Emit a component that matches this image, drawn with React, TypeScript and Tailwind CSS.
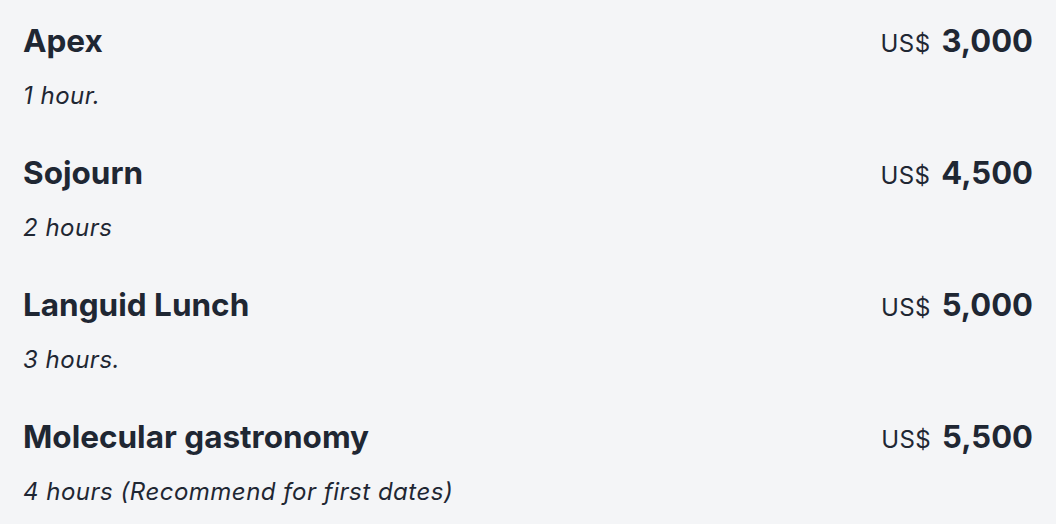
const items = [
  { name: 'Apex', note: '1 hour.', price: '3,000' },
  { name: 'Sojourn', note: '2 hours', price: '4,500' },
  { name: 'Languid Lunch', note: '3 hours.', price: '5,000' },
  { name: 'Molecular gastronomy', note: '4 hours (Recommend for first dates)', price: '5,500' },
];

export default function App() {
  return (
    <div
      className="min-h-screen bg-[#f4f5f7] text-[#1f2733] px-[23px]"
      style={{ fontFamily: 'Inter, "Noto Sans", sans-serif' }}
    >
      {items.map(({ name, note, price }) => (
        <div key={name} className="flex flex-col pt-[21px] pb-[20px] gap-[19px]">
          <div className="flex h-[40px] items-baseline justify-between leading-[40px]">
            <h3 className="text-[31.5px] font-bold">{name}</h3>
            <span className="flex items-baseline gap-[11px]">
              <span className="text-[24px] tracking-[0.4px]">US$</span>
              <span className="text-[31px] font-bold">{price}</span>
            </span>
          </div>
          <p className="text-[24px] leading-[32px] italic tracking-[0.5px]">{note}</p>
        </div>
      ))}
    </div>
  );
}
